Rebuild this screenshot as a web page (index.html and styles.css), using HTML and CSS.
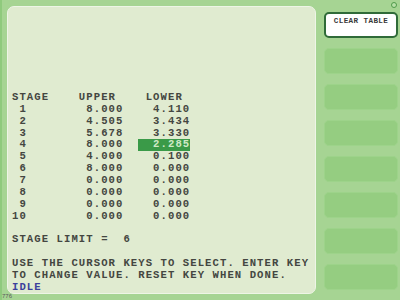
FILE: index.html
```html
<!DOCTYPE html>
<html lang="en">
<head>
<meta charset="UTF-8">
<title>Stage Table</title>
<link rel="stylesheet" href="styles.css">
</head>
<body>

<div class="screen">
    <div class="panel">
<pre class="table">STAGE    UPPER    LOWER
 1        8.000    4.110
 2        4.505    3.434
 3        5.678    3.330
 4        8.000  <span class="sel">  2.285</span>
 5        4.000    0.100
 6        8.000    0.000
 7        0.000    0.000
 8        0.000    0.000
 9        0.000    0.000
10        0.000    0.000

STAGE LIMIT =  6

USE THE CURSOR KEYS TO SELECT. ENTER KEY
TO CHANGE VALUE. RESET KEY WHEN DONE.
<span class="status">IDLE</span></pre>
    </div>
    <div class="keys">
        <button class="key active">CLEAR TABLE</button>
        <button class="key"></button>
        <button class="key"></button>
        <button class="key"></button>
        <button class="key"></button>
        <button class="key"></button>
        <button class="key"></button>
        <button class="key"></button>
    </div>
    <span class="led"></span>
    <span class="code">776</span>
</div>

</body>
</html>
```

FILE: styles.css
```css
body {
    margin: 0;
    background-color: #a6d493;
}
.screen {
    position: relative;
    display: flex;
    width: 398px;
    height: 300px;
    border-left: 2px solid #8fca7d;
    background-color: #a6d493;
}
.panel {
    box-sizing: border-box;
    width: 309px;
    height: 288px;
    margin: 6px 0 0 5px;
    padding: 85px 0 0 4px;
    background-color: #e0ebd0;
    border: 1px solid #eef5e6;
    border-radius: 7px;
}
.table {
    margin: 0;
    font-family: "Liberation Mono", "Courier New", monospace;
    font-weight: bold;
    font-size: 10.6px;
    letter-spacing: 1.07px;
    line-height: 11.85px;
    color: #444641;
}
.sel {
    display: inline-block;
    height: 12px;
    line-height: 11.85px;
    vertical-align: top;
    background-color: #3a9a48;
    color: #cfe9c6;
}
.status {
    color: #3b3f9c;
}
.keys {
    display: flex;
    flex-direction: column;
    gap: 10px;
    margin: 12px 0 0 8px;
}
.key {
    box-sizing: border-box;
    width: 74px;
    height: 26px;
    padding: 2px 0 0;
    border: 1px solid #9dd38a;
    border-radius: 5px;
    background-color: #95cd81;
    font-family: "Liberation Mono", "Courier New", monospace;
    font-weight: bold;
    font-size: 7.6px;
    letter-spacing: 0.4px;
    color: #3a3a3a;
    line-height: 10px;
}
.key.active {
    display: flex;
    justify-content: center;
    align-items: flex-start;
    border: 2px solid #2f6b38;
    background-color: #fff;
}
.led {
    position: absolute;
    top: 2px;
    left: 389px;
    width: 4px;
    height: 4px;
    border: 1px solid #4f9a4a;
    border-radius: 50%;
    background-color: #b8e0a8;
}
.code {
    position: absolute;
    left: 0;
    top: 293px;
    font-family: "Liberation Sans", Arial, sans-serif;
    font-size: 6px;
    color: #5a5a5a;
}
```
